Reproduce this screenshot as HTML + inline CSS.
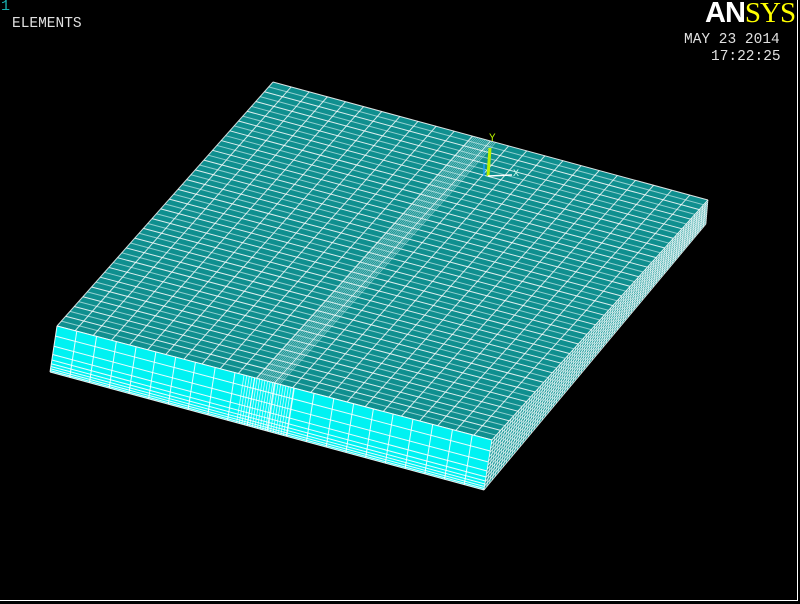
<!DOCTYPE html>
<html><head><meta charset="utf-8"><style>
html,body{margin:0;padding:0;background:#000;width:800px;height:604px;overflow:hidden}
.t{position:absolute;font-family:"Liberation Mono",monospace;color:#e0e0e0;font-size:14.5px;line-height:14px;white-space:pre}
</style></head><body>
<svg id="s" width="800" height="604" style="position:absolute;left:0;top:0" xmlns="http://www.w3.org/2000/svg">
<rect width="800" height="604" fill="#000"/>
<line x1="797.5" y1="0" x2="797.5" y2="600" stroke="#fff" stroke-width="1"/>
<line x1="0" y1="600.5" x2="798" y2="600.5" stroke="#fff" stroke-width="1"/>
<g id="g"></g>
<line x1="490" y1="148" x2="488" y2="176" stroke="#b8f000" stroke-width="3"/>
<line x1="488" y1="176" x2="512" y2="175" stroke="#fff" stroke-width="1.5"/>
<line x1="484" y1="164" x2="484" y2="176" stroke="#1aa0ff" stroke-width="1.5"/>
<text x="489" y="141" fill="#b8f000" font-family="Liberation Mono,monospace" font-size="11">Y</text>
<text x="513" y="176" fill="#cfe" font-family="Liberation Mono,monospace" font-size="10">X</text>
</svg>
<div class="t" style="left:1px;top:0px;color:#19b0b0;font-size:15px">1</div>
<div class="t" style="left:12px;top:17px">ELEMENTS</div>
<div style="position:absolute;left:705px;top:-1px;font-size:29px;line-height:28px;letter-spacing:-1px"><span style="color:#fff;font-family:'Liberation Sans',sans-serif;font-weight:bold">AN</span><span style="color:#ffff00;font-family:'Liberation Serif',serif">SYS</span></div>
<div class="t" style="left:684px;top:33px">MAY 23 2014</div>
<div class="t" style="left:711px;top:50px">17:22:25</div>
<script>
var g=document.getElementById('g'),NS='http://www.w3.org/2000/svg';
function el(n,a){var e=document.createElementNS(NS,n);for(var k in a)e.setAttribute(k,a[k]);g.appendChild(e);return e}
function L(p,q,c,w,o){el('line',{x1:p[0],y1:p[1],x2:q[0],y2:q[1],stroke:c,'stroke-width':w||1,'stroke-opacity':o||1})}
function lp(a,b,t){return [a[0]+(b[0]-a[0])*t,a[1]+(b[1]-a[1])*t]}
function bl(A,B,C,D,u,v){return lp(lp(A,B,u),lp(D,C,u),v)}
var A=[273,82],B=[708,200],C=[492,440],D=[57,326],E=[484,490],F=[50,372],B2=[706,224];
el('polygon',{points:[A,B,C,D].join(' '),fill:'#0f8f8f'});
var nr=50,nc=24;
for(var i=0;i<=nr;i++){var v=i/nr;L(bl(A,B,C,D,0,v),bl(A,B,C,D,1,v),i%2?'#a8dada':'#fff',1,0.85)}
for(var j=0;j<=nc;j++){var u=j/nc;L(bl(A,B,C,D,u,0),bl(A,B,C,D,u,1),'#fff',1,0.8)}
for(var k=0;k<14;k++){var u=0.46+k*0.004;L(bl(A,B,C,D,u,0),bl(A,B,C,D,u,1),'#d8f4f4',0.7,0.6)}
el('polygon',{points:[D,C,E,F].join(' '),fill:'#00f2f2'});
var fr=[0,0.22,0.44,0.62,0.74,0.82,0.88,0.93,0.97,1];
fr.forEach(function(v){L(bl(D,C,E,F,0,v),bl(D,C,E,F,1,v),'#fff',1,0.9)});
for(var j=0;j<=22;j++){var u=j/22;L(bl(D,C,E,F,u,0),bl(D,C,E,F,u,1),'#fff',1,0.9)}
for(var k=0;k<20;k++){var u=0.43+k*0.006;L(bl(D,C,E,F,u,0),bl(D,C,E,F,u,1),'#fff',0.8,0.8)}
el('polygon',{points:[C,B,B2,E].join(' '),fill:'#1a9a9a'});
for(var i=0;i<=12;i++){var v=i/12;L(lp(C,E,v),lp(B,B2,v),'#fff',0.8,0.85)}
for(var j=0;j<=80;j++){var u=j/80;L(lp(C,B,u),lp(E,B2,u),'#fff',0.7,0.8)}
</script>
</body></html>
